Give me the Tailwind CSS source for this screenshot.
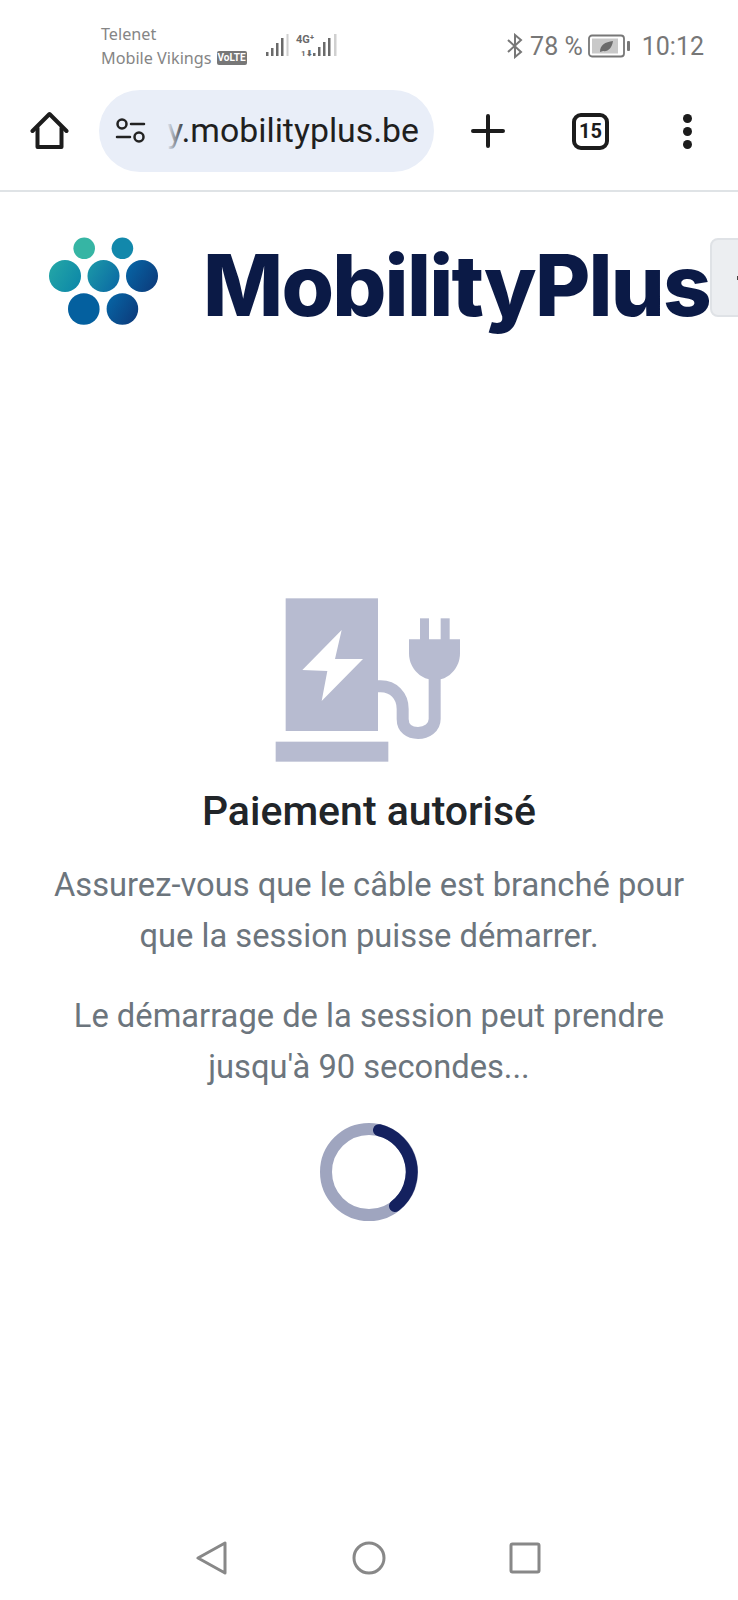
<!DOCTYPE html>
<html lang="fr">
<head>
  <meta charset="UTF-8" />
  <meta name="viewport" content="width=device-width, initial-scale=1.0" />
  <title>MobilityPlus</title>
  <script src="https://cdn.jsdelivr.net/npm/@tailwindcss/browser@4"></script>
</head>
<body class="bg-white overflow-hidden font-['Roboto',sans-serif]">
  <div class="flex flex-col w-[738px] h-[1600px]">

    <!-- status bar -->
    <div class="flex items-center h-[86px] pt-[6px] pl-[101px] pr-[34px] shrink-0">
      <div class="flex flex-col font-['Noto_Sans',sans-serif] text-[16.200px] leading-[24px] text-[#858585] w-[161px] shrink-0">
        <span>Telenet</span>
        <span class="flex items-center gap-[5px] whitespace-nowrap">Mobile Vikings
          <span class="bg-[#777] text-white rounded-[2px] text-[10px] leading-[14px] font-bold px-[1px] font-['Roboto',sans-serif]">VoLTE</span>
        </span>
      </div>
      <svg class="-mt-[4px]" width="76" height="28" viewBox="0 0 76 28">
        <g fill="#6a6a6a">
          <rect x="4" y="22" width="2.500" height="4"/><rect x="9" y="18" width="2.500" height="8"/><rect x="14" y="13" width="2.500" height="13"/><rect x="19" y="8" width="2.500" height="18"/>
          <rect x="51" y="23" width="2.500" height="3"/><rect x="56" y="17" width="2.500" height="9"/><rect x="61" y="12" width="2.500" height="14"/><rect x="66" y="8" width="2.500" height="18"/>
          <text x="34" y="13" font-size="11" font-weight="700" font-family="Roboto">4G⁺</text>
          <text x="39" y="26" font-size="8" font-weight="700" font-family="Roboto">1⬇</text>
        </g>
        <rect x="24.500" y="4" width="2" height="22" fill="#d0d0d0"/>
        <rect x="72" y="4" width="2.500" height="22" fill="#d0d0d0"/>
      </svg>
      <div class="ml-auto flex items-center text-[#777] text-[25px] leading-none">
        <svg width="18" height="26" viewBox="0 0 18 26" fill="none" stroke="#777" stroke-width="2"><path d="M2 7l13 12-6 5V2l6 5L2 19"/></svg>
        <span class="ml-[6px]">78 %</span>
        <svg class="ml-[5px]" width="44" height="24" viewBox="0 0 44 24">
          <rect x="1" y="1.500" width="35" height="21" rx="3" fill="none" stroke="#777" stroke-width="1.800"/>
          <rect x="4" y="4.500" width="26" height="15" fill="#c9c9c9"/>
          <path d="M12 18c0-7 5-10 13-11-1 7-5 11-10 10z" fill="#6b6b6b"/>
          <rect x="39" y="7" width="3" height="10" rx="1" fill="#777"/>
        </svg>
        <span class="ml-[10px]">10:12</span>
      </div>
    </div>

    <!-- browser toolbar -->
    <div class="flex items-center h-[106px] border-b-2 border-[#dfe3e6] pb-[14px] shrink-0">
      <svg class="ml-[30px]" width="40" height="40" viewBox="0 0 40 40" fill="none" stroke="#1c1c1c" stroke-width="4" stroke-linejoin="round" stroke-linecap="round">
        <path d="M2.500 20L19.500 3 36.500 20"/><path d="M7.500 17v19h24V17"/>
      </svg>
      <div class="relative flex items-center ml-[29px] w-[335px] h-[82px] rounded-full bg-[#e9eef8]">
        <svg class="ml-[16px] shrink-0" width="32" height="28" viewBox="0 0 32 28" fill="none" stroke="#222" stroke-width="2.500" stroke-linecap="round">
          <circle cx="7" cy="7" r="4.500"/><path d="M16 7h13"/><circle cx="24" cy="20" r="4.500"/><path d="M2 20h13"/>
        </svg>
        <div class="relative ml-[15px] w-[257px] overflow-hidden flex justify-end">
          <span class="text-[33.800px] leading-[44px] text-[#1f1f1f] whitespace-nowrap">ay.mobilityplus.be</span>
          <div class="absolute left-0 top-0 w-[24px] h-full bg-linear-to-r from-[#e9eef8] from-20% to-[#e9eef8]/0"></div>
        </div>
      </div>
      <svg class="ml-[37px]" width="34" height="34" viewBox="0 0 34 34" stroke="#1c1c1c" stroke-width="4" stroke-linecap="round"><path d="M17 2v30M2 17h30"/></svg>
      <div class="ml-[67px] flex items-center justify-center w-[37px] h-[37px] rounded-[9px] border-4 border-[#1c1c1c] text-[20px] font-bold text-[#1c1c1c]">15</div>
      <div class="ml-[74px] flex flex-col gap-[4px]">
        <span class="block w-[9px] h-[9px] rounded-full bg-[#1c1c1c]"></span>
        <span class="block w-[9px] h-[9px] rounded-full bg-[#1c1c1c]"></span>
        <span class="block w-[9px] h-[9px] rounded-full bg-[#1c1c1c]"></span>
      </div>
    </div>

    <!-- site header -->
    <div class="flex items-start h-[393px] overflow-hidden shrink-0">
      <svg class="ml-[49px] mt-[40px] shrink-0" width="110" height="94" viewBox="0 0 110 94">
        <defs>
          <linearGradient id="dot1" x1="0" y1="0" x2="1" y2="0.600"><stop offset="0" stop-color="#25a8a6"/><stop offset="1" stop-color="#0f8aa8"/></linearGradient>
          <linearGradient id="dot2" x1="0" y1="0" x2="1" y2="0.600"><stop offset="0" stop-color="#1c9aa8"/><stop offset="1" stop-color="#0d6ea4"/></linearGradient>
          <linearGradient id="dot3" x1="0" y1="0" x2="1" y2="0.600"><stop offset="0" stop-color="#0668a8"/><stop offset="1" stop-color="#0c3f7f"/></linearGradient>
        </defs>
        <circle cx="35.200" cy="16.300" r="10.800" fill="#36b5a4"/>
        <circle cx="73.400" cy="16.300" r="10.800" fill="#1288ab"/>
        <circle cx="16" cy="44" r="16" fill="url(#dot1)"/>
        <circle cx="54.500" cy="44" r="16" fill="url(#dot2)"/>
        <circle cx="93" cy="44" r="16" fill="url(#dot3)"/>
        <circle cx="34.800" cy="77" r="15.800" fill="#04609f"/>
        <circle cx="73.400" cy="77" r="15.800" fill="url(#dot3)"/>
      </svg>
      <span class="ml-[44px] mt-[44px] text-[85px] leading-[100px] font-extrabold tracking-[-1.800px] text-[#0b1a46] font-['Inter',sans-serif] whitespace-nowrap w-[507px] shrink-0">MobilityPlus</span>
      <div class="flex items-center mt-[46px] pl-[25px] w-[40px] h-[79px] shrink-0 rounded-[8px] bg-[#eceef1] border-2 border-[#dfe2e6]">
        <span class="block w-[3px] h-[4px] bg-[#444]"></span>
      </div>
    </div>

    <!-- session message -->
    <main class="flex flex-col items-center">
      <svg width="220" height="185" viewBox="0 0 660 555">
        <g fill="#b7bbd0">
          <rect x="80" y="40" width="277" height="398"/>
          <rect x="50" y="470" width="338" height="60"/>
          <rect x="483" y="100" width="27" height="70"/>
          <rect x="545" y="100" width="27" height="70"/>
          <path d="M450 163h153v42c0 42-30 72-58 78h-35c-30-6-60-36-60-78z"/>
        </g>
        <path d="M357 304h8c38 0 66 28 66 68v30c0 28 20 42 46 42s50-16 50-42V270" fill="none" stroke="#b7bbd0" stroke-width="36"/>
        <path d="M248 135L130 255l75 3-17 90 124-126h-84z" fill="#fff"/>
      </svg>

      <h1 class="mt-[16px] text-[41px] leading-[50px] font-medium text-[#212529]">Paiement autorisé</h1>

      <div class="mt-[24px] text-center text-[32.700px] leading-[51px] text-[#6c757d]">
        <p>Assurez-vous que le câble est branché pour<br />que la session puisse démarrer.</p>
        <p class="mt-[29px]">Le démarrage de la session peut prendre<br />jusqu'à 90 secondes...</p>
      </div>

      <svg class="mt-[29px]" width="100" height="100" viewBox="0 0 100 100" fill="none" stroke-width="12">
        <circle cx="50" cy="50" r="43" stroke="#9fa5bf"/>
        <path d="M60 8.200A43 43 0 0 1 76 84" stroke="#14215f" stroke-linecap="round"/>
      </svg>
    </main>

    <!-- android nav -->
    <div class="mt-auto flex items-center h-[80px] pb-[4px] pl-[196px] shrink-0">
      <svg width="32" height="36" viewBox="0 0 32 36" fill="none" stroke="#888" stroke-width="3" stroke-linejoin="round"><path d="M29 3v30L2 18z"/></svg>
      <svg class="ml-[124px]" width="34" height="34" viewBox="0 0 34 34" fill="none" stroke="#888" stroke-width="3"><circle cx="17" cy="17" r="15"/></svg>
      <svg class="ml-[123px]" width="32" height="32" viewBox="0 0 32 32" fill="none" stroke="#888" stroke-width="3" stroke-linejoin="round"><rect x="2" y="2" width="28" height="28" rx="1.500"/></svg>
    </div>
  </div>
</body>
</html>
